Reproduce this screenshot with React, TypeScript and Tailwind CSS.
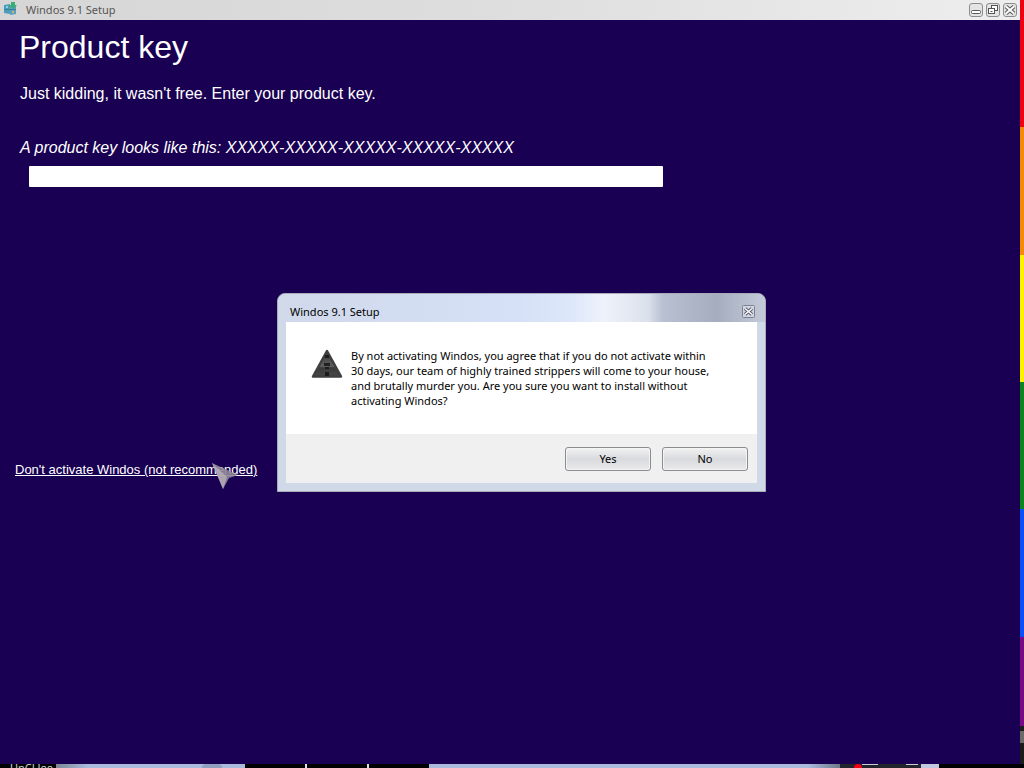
import React from 'react';

const stripes = [
  'flex-[128] bg-[#ee0010]',
  'flex-[128] bg-[#f48a08]',
  'flex-[128] bg-[#fff200]',
  'flex-[128] bg-[#0c8420]',
  'flex-[128] bg-[#0a50f8]',
  'flex-[90] bg-[#780a86]',
  'flex-[5] bg-[#1c1c1c]',
  'flex-[12] bg-[#6a6a6a]',
  'flex-[21] bg-[#1c1c1c]',
];

interface WindowButtonProps {
  label: string;
  children: React.ReactNode;
}

function WindowButton({ label, children }: WindowButtonProps) {
  return (
    <button type="button" aria-label={label} className="h-4 w-4">
      <svg viewBox="0 0 16 16" className="h-4 w-4" fill="none" stroke="#555">
        <rect x="1.5" y="1.5" width="13" height="13" rx="2.5" fill="#e4e4e4" stroke="#8c8c8c" />
        {children}
      </svg>
    </button>
  );
}

function SetupIcon() {
  return (
    <svg viewBox="0 0 16 16" className="h-4 w-4" aria-hidden="true">
      <path d="M2 3l6-1v10l-6-1z" fill="#4a9cb8" />
      <path d="M8 4l6-1v9l-6 1z" fill="#5a9fc0" />
      <path d="M2 7h12v1H2z" fill="#3a7f98" />
      <path d="M9 0h4v3h2l-4 4-4-4h2z" fill="#38ad70" />
      <path d="M4 4h2v2H4z" fill="#8ed4dd" />
      <path d="M10 9h2v2h-2z" fill="#c9b96a" />
    </svg>
  );
}

function TitleBar() {
  return (
    <header className="flex h-5 items-center bg-gradient-to-r from-[#d6d6d6] via-[#dedede] to-[#eeeeee] px-0.5">
      <div className="flex items-center gap-2">
        <SetupIcon />
        <span className="text-[11px] leading-4 text-[#555]">Windos 9.1 Setup</span>
      </div>
      <div className="ml-auto flex gap-px">
        <WindowButton label="Minimize">
          <rect x="3.5" y="8.5" width="9" height="3" rx="1" fill="#fff" />
        </WindowButton>
        <WindowButton label="Restore">
          <rect x="6.5" y="3.5" width="6" height="5" fill="#fff" />
          <rect x="3.5" y="6.5" width="6" height="5" fill="#fff" />
          <path d="M5.5 9.5h2" />
        </WindowButton>
        <WindowButton label="Close">
          <path d="M4 4.5l8 7M12 4.5l-8 7" strokeWidth="4" />
          <path d="M4 4.5l8 7M12 4.5l-8 7" stroke="#fff" strokeWidth="2" />
        </WindowButton>
      </div>
    </header>
  );
}

function WarningIcon() {
  return (
    <svg viewBox="0 0 32 32" className="h-8 w-8 shrink-0" aria-hidden="true">
      <defs>
        <linearGradient id="warning" x1="0" y1="0" x2="0" y2="1">
          <stop offset="0" stopColor="#333" />
          <stop offset="0.6" stopColor="#606060" />
          <stop offset="0.66" stopColor="#3a3a3a" />
          <stop offset="1" stopColor="#484848" />
        </linearGradient>
      </defs>
      <path
        d="M16 3L30 28.500H2z"
        fill="url(#warning)"
        stroke="#3f3f3f"
        strokeWidth="2.5"
        strokeLinejoin="round"
      />
      <path
        d="M14 7h4v3h-4zM13 15h6v3h-6zM14 19h4v2h-4zM14 24h4v4h-4z"
        fill="#161616"
        fillOpacity="0.85"
      />
    </svg>
  );
}

interface DialogButtonProps {
  children: React.ReactNode;
}

function DialogButton({ children }: DialogButtonProps) {
  return (
    <button
      type="button"
      className="h-6 w-[86px] rounded-[3px] border border-[#8c8c90] bg-gradient-to-b from-[#f2f2f2] via-[#d9dade] to-[#eaeaec] text-[11px] leading-4 text-black shadow-[inset_0_0_0_1px_#f4f4f4]"
    >
      {children}
    </button>
  );
}

function ActivationDialog() {
  return (
    <section
      role="dialog"
      aria-labelledby="dialog-title"
      className="absolute left-[277px] top-[293px] w-[489px] rounded-t-lg border border-[#a9abb8] bg-[#d0d9e8] px-2 pb-2 text-black"
    >
      <div className="-mx-2 flex h-7 items-end rounded-t-lg bg-[linear-gradient(90deg,#d0d8ea_0%,#d6e1f7_50%,#dde7fa_60%,#eef2fb_67%,#dbe1ec_76%,#b9c0d1_79%,#a6adbe_90%,#c3cbda_100%)] pb-0.5 pl-3 pr-2">
        <h2 id="dialog-title" className="text-[11px] leading-4">
          Windos 9.1 Setup
        </h2>
        <button type="button" aria-label="Close dialog" className="ml-auto h-4 w-4">
          <svg viewBox="0 0 16 16" className="h-4 w-4" fill="none">
            <rect x="1.5" y="1.5" width="12" height="12" rx="1" fill="#d3d7e0" stroke="#7c8094" />
            <path d="M4 4.5l7 6M11 4.5l-7 6" stroke="#555a70" strokeWidth="3.5" />
            <path d="M4 4.5l7 6M11 4.5l-7 6" stroke="#fff" strokeWidth="1.5" />
          </svg>
        </button>
      </div>
      <div className="flex min-h-28 items-start gap-2 bg-white pl-[25px] pt-[26px]">
        <WarningIcon />
        <p className="w-[390px] text-[11px] leading-[15px]">
          By not activating Windos, you agree that if you do not activate within
          <br />
          30 days, our team of highly trained strippers will come to your house,
          <br />
          and brutally murder you. Are you sure you want to install without
          <br />
          activating Windos?
        </p>
      </div>
      <div className="flex h-[49px] items-center justify-end gap-[11px] bg-[#f0f0f0] pr-[9px]">
        <DialogButton>Yes</DialogButton>
        <DialogButton>No</DialogButton>
      </div>
    </section>
  );
}

function Cursor() {
  return (
    <svg viewBox="0 0 28 28" className="absolute left-[211px] top-[462px] size-7" aria-hidden="true">
      <path d="M1 1l26 12-9 3-6 11z" fill="#8f8798" fillOpacity="0.9" />
      <path d="M1 1l15 14-4 12z" fill="#bdb5bf" fillOpacity="0.7" />
    </svg>
  );
}

function DesktopStrip() {
  return (
    <footer className="flex h-1 overflow-hidden bg-[#a9badd]">
      <div className="w-14 bg-black pl-2.5 text-[11px] leading-[7px] text-[#c8d4d4]">UnCLJee</div>
      <div className="w-8 bg-gradient-to-r from-[#7c8796] to-[#a9badd]" />
      <div className="ml-[114px] h-1 w-5 rounded-t-full bg-[#8f9fbd]" />
      <div className="ml-[23px] flex gap-0.5 bg-[#d6def0]">
        <div className="w-[60px] bg-black" />
        <div className="w-[60px] bg-black" />
        <div className="w-[60px] bg-black" />
      </div>
      <div className="ml-auto w-8 bg-gradient-to-r from-[#a9badd] to-[#6e7989]" />
      <div className="flex w-[81px] bg-[#22252e] pl-3.5">
        <div className="h-1 w-2 rounded-t-full bg-[#f50010]" />
        <div className="h-px w-4 bg-[#c9cdd8]" />
        <div className="ml-7 h-px w-3 bg-[#c9cdd8]" />
      </div>
      <div className="w-[18px] bg-[#c1c8df]" />
      <div className="w-[85px] bg-black" />
    </footer>
  );
}

export default function App() {
  return (
    <div className="relative flex min-h-screen flex-col bg-[#190052] font-['Noto_Sans','Open_Sans',sans-serif] text-white">
      <div className="flex flex-1">
        <div className="flex flex-1 flex-col">
          <TitleBar />
          <main className="flex flex-1 flex-col items-start font-['Liberation_Sans',Arial,sans-serif]">
            <h1 className="ml-[19px] mt-[7px] text-[32px] leading-10">Product key</h1>
            <p className="ml-5 mt-[17px] text-base leading-5">
              Just kidding, it wasn't free. Enter your product key.
            </p>
            <label htmlFor="product-key" className="ml-5 mt-8 text-base italic leading-6">
              A product key looks like this: XXXXX-XXXXX-XXXXX-XXXXX-XXXXX
            </label>
            <input
              id="product-key"
              type="text"
              className="ml-[29px] mt-1.5 h-[21px] w-[634px] rounded-[1px] bg-white px-1 text-sm text-black outline-none"
            />
            <a href="#skip" className="ml-[15px] mt-[273px] text-[13px] leading-5 underline">
              Don't activate Windos (not recommended)
            </a>
          </main>
        </div>
        <div className="flex w-1 flex-col">
          {stripes.map((stripe) => (
            <div key={stripe} className={stripe} />
          ))}
        </div>
      </div>
      <DesktopStrip />
      <ActivationDialog />
      <Cursor />
    </div>
  );
}
